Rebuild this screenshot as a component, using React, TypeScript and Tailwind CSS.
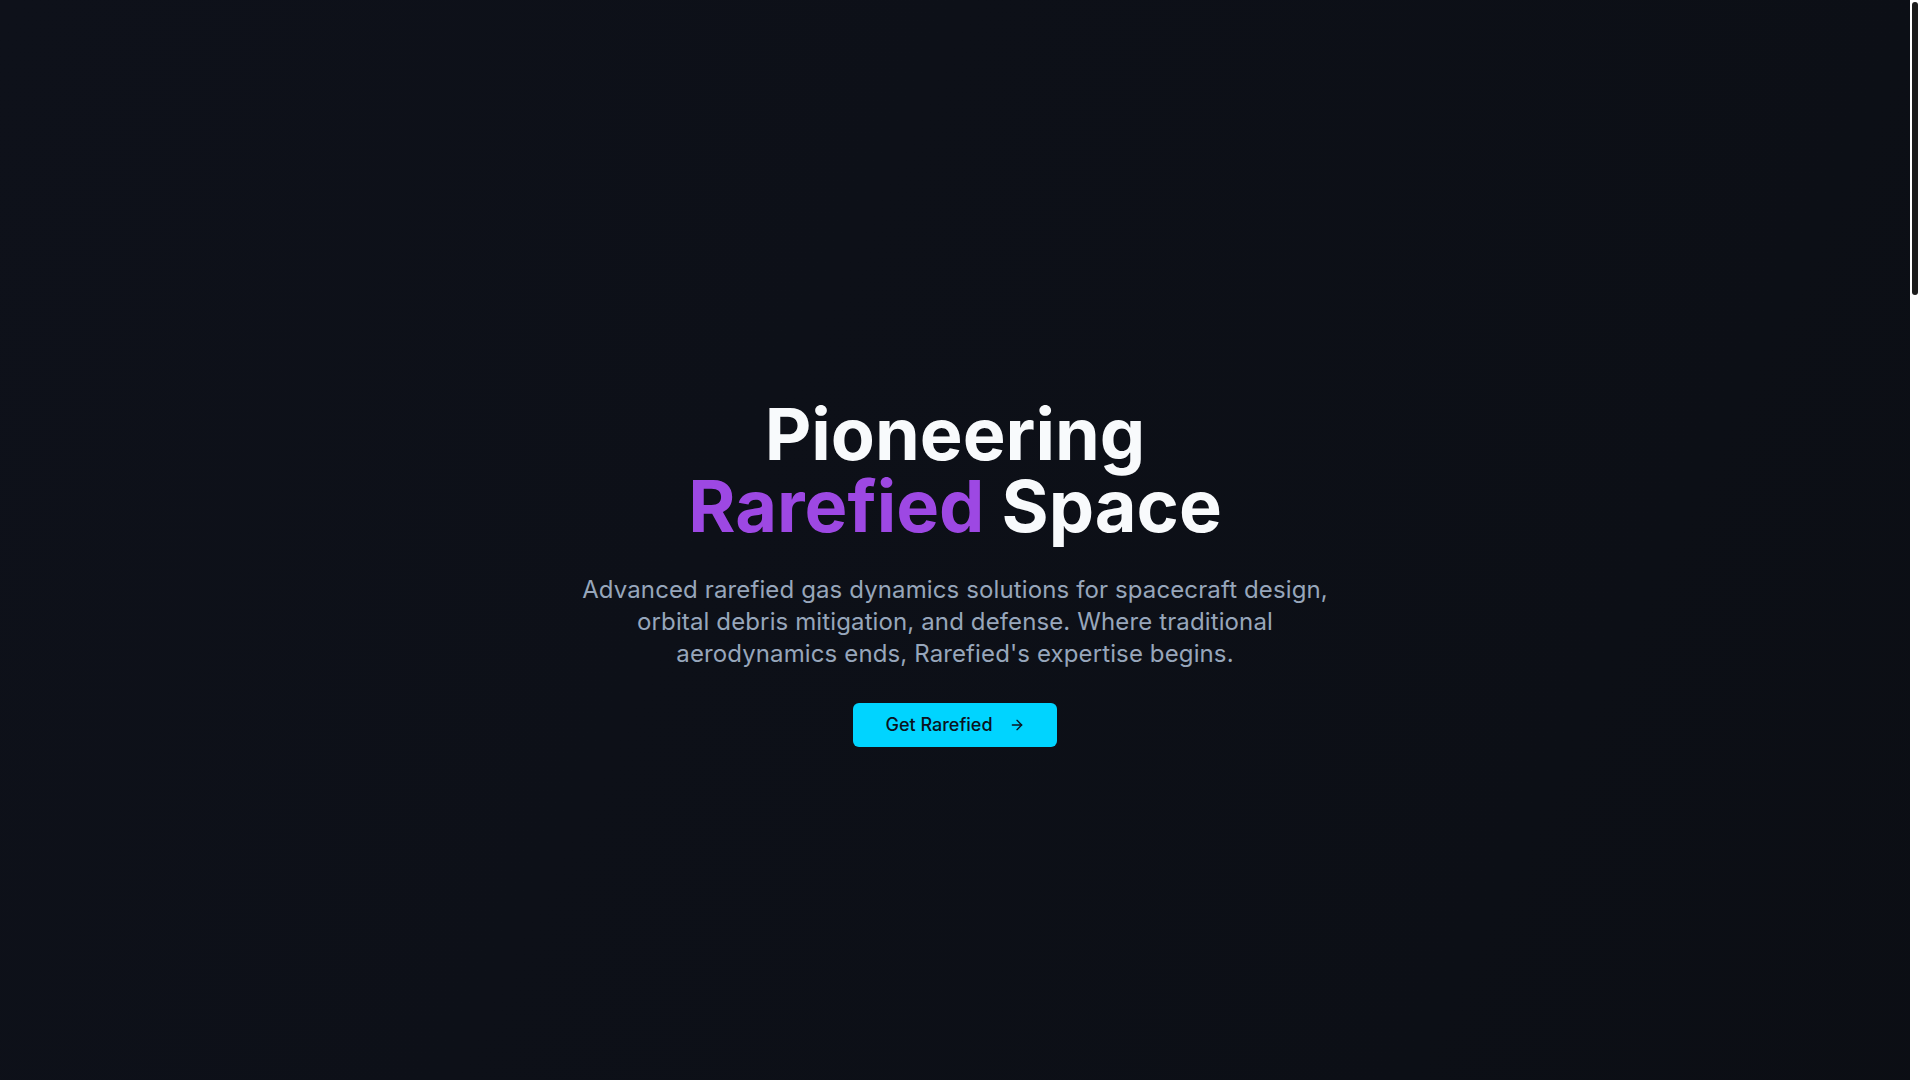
import React from "react";

const ArrowRight = () => (
  <svg
    xmlns="http://www.w3.org/2000/svg"
    width="16"
    height="16"
    viewBox="0 0 24 24"
    fill="none"
    stroke="currentColor"
    strokeWidth="2"
    strokeLinecap="round"
    strokeLinejoin="round"
  >
    <path d="M5 12h14" />
    <path d="m12 5 7 7-7 7" />
  </svg>
);

const Hero = () => {
  return (
    <section className="min-h-screen pt-16 flex items-center justify-center px-6">
      <div className="flex flex-col items-center text-center">
        <h1 className="text-[72px] leading-none font-bold text-[#f8fafc]">
          Pioneering
          <br />
          <span className="text-[#9d48e3]">Rarefied</span> Space
        </h1>
        <p className="mt-8 max-w-3xl text-2xl leading-8 tracking-[0.005em] text-[#97a6bb]">
          Advanced rarefied gas dynamics solutions for spacecraft design,
          orbital debris mitigation, and defense. Where traditional
          aerodynamics ends, Rarefied's expertise begins.
        </p>
        <button className="mt-[33px] flex items-center gap-4 rounded-md bg-[#00d4ff] px-8 py-2 text-lg leading-7 font-medium text-[#0b1220]">
          Get Rarefied
          <ArrowRight />
        </button>
      </div>
    </section>
  );
};

// stands in for the browser's scrollbar shown in the screenshot
const Scrollbar = () => (
  <div className="fixed top-0 right-0 h-screen w-[10px] bg-white">
    <div className="mx-auto mt-[2px] h-[293px] w-[6px] rounded-full bg-[#1c1c1c]" />
  </div>
);

export default function App() {
  return (
    <div
      className="min-h-screen pr-[10px] bg-gradient-to-br from-[#0e111a] via-[#0c0f16] to-[#0a0b0f]"
      style={{ fontFamily: "Inter, 'Noto Sans', sans-serif" }}
    >
      <Hero />
      <div className="h-[2900px]" />
      <Scrollbar />
    </div>
  );
}
